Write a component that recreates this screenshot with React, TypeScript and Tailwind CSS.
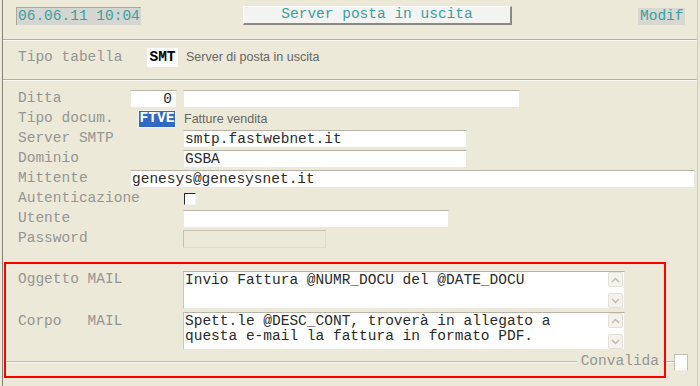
import type { ReactNode } from 'react';

const mono = 'font-["Liberation_Mono","Courier_New",monospace]';
const sans = 'font-["Liberation_Sans",Arial,sans-serif]';

function Label({ children }: { children: ReactNode }) {
  return <div className="w-[112px] shrink-0 whitespace-pre text-[#959595]">{children}</div>;
}

function Field({ w, children, className = '' }: { w: string; children?: ReactNode; className?: string }) {
  return (
    <div
      className={`${w} h-[18px] shrink-0 whitespace-nowrap border border-[#ebe9df] border-t-[#b7b4a6] bg-white pl-[1px] leading-[16px] text-[#2a2a2a] ${className}`}
    >
      {children}
    </div>
  );
}

function Row({ label, children }: { label: string; children?: ReactNode }) {
  return (
    <div className="flex h-[20px] items-center">
      <Label>{label}</Label>
      {children}
    </div>
  );
}

function Chevron({ up }: { up?: boolean }) {
  return (
    <div className="flex h-[15px] w-[15px] items-center justify-center rounded-[2px] border border-[#e3e1d7] bg-[#f3f2ec]">
      <svg width="9" height="6" viewBox="0 0 9 6">
        <path d={up ? 'M1 5 L4.5 1.5 L8 5' : 'M1 1 L4.5 4.5 L8 1'} fill="none" stroke="#bdbbb0" strokeWidth="1.4" />
      </svg>
    </div>
  );
}

function MemoBox({ lines }: { lines: string[] }) {
  return (
    <div className="flex h-[38px] w-[442px] border border-[#ebe9df] border-t-[#b7b4a6] border-l-[#c9c6b8] bg-white">
      <div className="flex-1 whitespace-pre pl-[1px] pt-[1px] leading-[15px] text-[#2a2a2a]">
        {lines.map((l) => (
          <div key={l}>{l}</div>
        ))}
      </div>
      <div className="flex w-[16px] flex-col justify-between">
        <Chevron up />
        <Chevron />
      </div>
    </div>
  );
}

export default function App() {
  return (
    <div className={`relative h-[386px] w-[700px] overflow-hidden bg-[#ece9d8] pl-[2px] text-[14.5px] ${mono}`}>
      <div className="h-full w-[696px] border-l border-r border-l-[#85837a] border-r-[#cfccbf]">
        {/* header */}
        <div className="flex h-[39px] items-start">
          <div className="ml-[13px] mt-[7px] h-[18px] w-[125px] whitespace-nowrap border-l border-t border-[#a9a89f] bg-[#d5d5d1] pl-[1px] leading-[17px] text-[#3a9f9f]">
            06.06.11 10:04
          </div>
          <div className="ml-[102px] mt-[6px] flex h-[19px] w-[269px] items-center justify-center whitespace-nowrap border border-b-2 border-r-2 border-t-white border-l-white border-b-[#8b8a83] border-r-[#8b8a83] bg-[#f3f3f1] text-[#3a9f9f]">
            Server posta in uscita
          </div>
          <div className="ml-[126px] mt-[8px] h-[17px] w-[47px] bg-[#d8d8d2] pl-[2px] leading-[16px] text-[#3a9f9f]">
            Modif
          </div>
        </div>
        <div className="h-px bg-[#b2afa2]" />
        <div className="h-px bg-[#f8f7f2]" />

        {/* tipo tabella */}
        <div className="h-[38px] pl-[15px] pt-[7px]">
          <div className="flex h-[19px] items-center">
            <div className="w-[129px] shrink-0 text-[#959595]">Tipo tabella</div>
            <div className="flex h-[19px] w-[31px] items-center justify-center bg-white font-bold text-black">SMT</div>
            <div className={`ml-[8px] text-[12.5px] text-[#666] ${sans}`}>Server di posta in uscita</div>
          </div>
        </div>
        <div className="h-px bg-[#b2afa2]" />
        <div className="h-px bg-[#f8f7f2]" />

        {/* fields */}
        <div className="pl-[15px] pt-[8px]">
          <Row label="Ditta">
            <Field w="w-[47px]" className="pr-[4px] text-right">
              0
            </Field>
            <Field w="w-[337px]" className="ml-[6px]" />
          </Row>
          <Row label="Tipo docum.">
            <div className="ml-[8px] flex h-[18px] w-[38px] items-center justify-center border border-[#f4f3ee] bg-[#316ac5] font-bold text-white">
              FTVE
            </div>
            <div className={`ml-[8px] text-[12.5px] text-[#666] ${sans}`}>Fatture vendita</div>
          </Row>
          <Row label="Server SMTP">
            <Field w="w-[284px]" className="ml-[53px]">
              smtp.fastwebnet.it
            </Field>
          </Row>
          <Row label="Dominio">
            <Field w="w-[284px]" className="ml-[53px]">
              GSBA
            </Field>
          </Row>
          <Row label="Mittente">
            <Field w="w-[565px]">genesys@genesysnet.it</Field>
          </Row>
          <Row label="Autenticazione">
            <div className="ml-[54px] h-[12px] w-[12px] border border-b-[#f4f3ee] border-r-[#f4f3ee] border-t-[#2b2b2b] border-l-[#2b2b2b] bg-white" />
          </Row>
          <Row label="Utente">
            <Field w="w-[266px]" className="ml-[53px]" />
          </Row>
          <Row label="Password">
            <div className="ml-[53px] h-[18px] w-[143px] border border-[#c4c1b4] border-b-[#e0ddd0] border-r-[#e0ddd0] bg-[#ece9d8]" />
          </Row>
        </div>

        {/* mail */}
        <div className="pt-[22px]">
          <div className="flex items-start pl-[15px]">
            <div className="w-[165px] shrink-0 whitespace-pre pt-[1px] leading-[15px] text-[#959595]">Oggetto MAIL</div>
            <MemoBox lines={['Invio Fattura @NUMR_DOCU del @DATE_DOCU']} />
          </div>
          <div className="mt-[3px] flex items-start pl-[15px]">
            <div className="w-[165px] shrink-0 whitespace-pre pt-[2px] leading-[15px] text-[#959595]">Corpo   MAIL</div>
            <MemoBox
              lines={['Spett.le @DESC_CONT, troverà in allegato a', 'questa e-mail la fattura in formato PDF.']}
            />
          </div>
          <div className="mt-[2px] flex h-[20px] items-center pl-[4px] pr-[9px]">
            <div className="h-[2px] flex-1 border-t border-b border-t-[#bdbaad] border-b-[#f8f7f2]" />
            <div className="px-[4px] text-[#959595]">Convalida</div>
            <div className="h-[2px] w-[11px] border-t border-b border-t-[#bdbaad] border-b-[#f8f7f2]" />
            <div className="h-[17px] w-[14px] border border-[#c4c1b4] border-b-[#f0efe8] bg-white" />
          </div>
        </div>
      </div>

      {/* red annotation frame */}
      <div className="pointer-events-none absolute left-[4px] top-[262px] h-[116px] w-[662px] border-2 border-[#ff0000]" />
    </div>
  );
}
